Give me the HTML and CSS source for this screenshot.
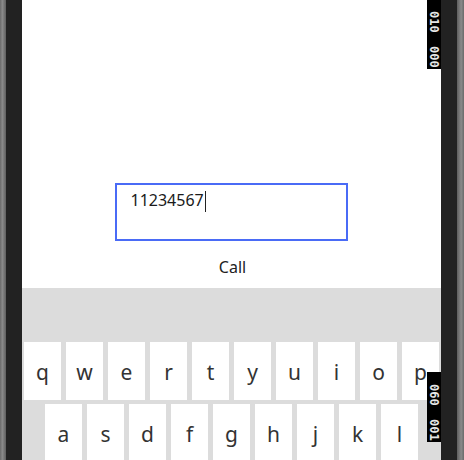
FILE: index.html
```html
<!DOCTYPE html>
<html>
<head>
<meta charset="utf-8">
<link rel="stylesheet" href="styles.css">
</head>
<body>
<div class="device">
  <div class="bezel bezel-left"><div class="edge"></div><div class="frame"></div></div>
  <div class="screen">
    <div class="app">
      <div class="field"><span class="value">11234567</span><span class="caret"></span></div>
      <div class="call">Call</div>
    </div>
    <div class="keyboard">
      <div class="row row1">
        <div class="key">q</div><div class="key">w</div><div class="key">e</div><div class="key">r</div><div class="key">t</div><div class="key">y</div><div class="key">u</div><div class="key">i</div><div class="key">o</div><div class="key">p</div>
      </div>
      <div class="row row2">
        <div class="key">a</div><div class="key">s</div><div class="key">d</div><div class="key">f</div><div class="key">g</div><div class="key">h</div><div class="key">j</div><div class="key">k</div><div class="key">l</div>
      </div>
    </div>
    <div class="counter counter-top"><span>010</span><span>000</span></div>
    <div class="counter counter-bottom"><span>060</span><span>001</span></div>
  </div>
  <div class="bezel bezel-right"><div class="frame"></div><div class="edge"></div></div>
</div>
</body>
</html>
```

FILE: styles.css
```css
html, body {
  margin: 0;
  padding: 0;
  width: 464px;
  height: 460px;
  overflow: hidden;
  background: #222;
}
.device {
  display: flex;
  width: 464px;
  height: 460px;
}
.bezel {
  display: flex;
  height: 100%;
}
.bezel-left { width: 22px; }
.bezel-right { width: 23px; }
.edge {
  width: 6px;
  background: linear-gradient(to right, #6a6a6a, #8a8a8a 40%, #5e5e5e);
}
.bezel-right .edge {
  width: 7px;
  background: linear-gradient(to right, #5e5e5e, #8a8a8a 60%, #6a6a6a);
}
.frame {
  flex: 1;
  background: #222;
}
.bezel-left .frame { width: 16px; }
.screen {
  position: relative;
  width: 419px;
  height: 100%;
  display: flex;
  flex-direction: column;
  background: #fff;
  font-family: "Noto Sans", "Open Sans", sans-serif;
  color: #222;
}
.app {
  height: 288px;
  flex: none;
  display: flex;
  flex-direction: column;
  align-items: center;
  padding-top: 183px;
  box-sizing: border-box;
}
.field {
  width: 233px;
  height: 58px;
  box-sizing: border-box;
  border: 2px solid #4a6bf6;
  padding: 3px 0 0 14px;
  display: flex;
  align-items: flex-start;
  font-size: 16px;
  line-height: 24px;
  color: #1a1a1a;
  margin-left: -1px;
}
.caret {
  width: 1px;
  height: 21px;
  margin-top: 3px;
  margin-left: 1px;
  background: #222;
}
.call {
  margin-top: 14px;
  font-size: 16px;
  line-height: 24px;
  color: #222;
  margin-left: 2px;
}
.keyboard {
  flex: 1;
  background: #dcdcdc;
  padding-top: 54px;
  box-sizing: border-box;
  display: flex;
  flex-direction: column;
  gap: 4px;
}
.row {
  display: flex;
  gap: 5px;
}
.row1 { padding-left: 2px; }
.row2 { padding-left: 23px; }
.key {
  width: 37px;
  height: 58px;
  flex: none;
  background: #fff;
  display: flex;
  align-items: center;
  justify-content: center;
  font-size: 21px;
  line-height: 1;
  color: #333;
  padding-top: 2px;
  box-sizing: border-box;
}
.counter {
  position: absolute;
  right: 0;
  width: 14px;
  background: #000;
  color: #e6e6e6;
  font-family: "DejaVu Sans Mono", monospace;
  font-size: 12px;
  font-weight: bold;
  writing-mode: vertical-rl;
  display: flex;
  gap: 13px;
  align-items: center;
  line-height: 14px;
  box-sizing: border-box;
}
.counter-top {
  top: 0;
  height: 69px;
  padding-top: 11px;
}
.counter-bottom {
  top: 372px;
  height: 70px;
  padding-top: 12px;
}
```
